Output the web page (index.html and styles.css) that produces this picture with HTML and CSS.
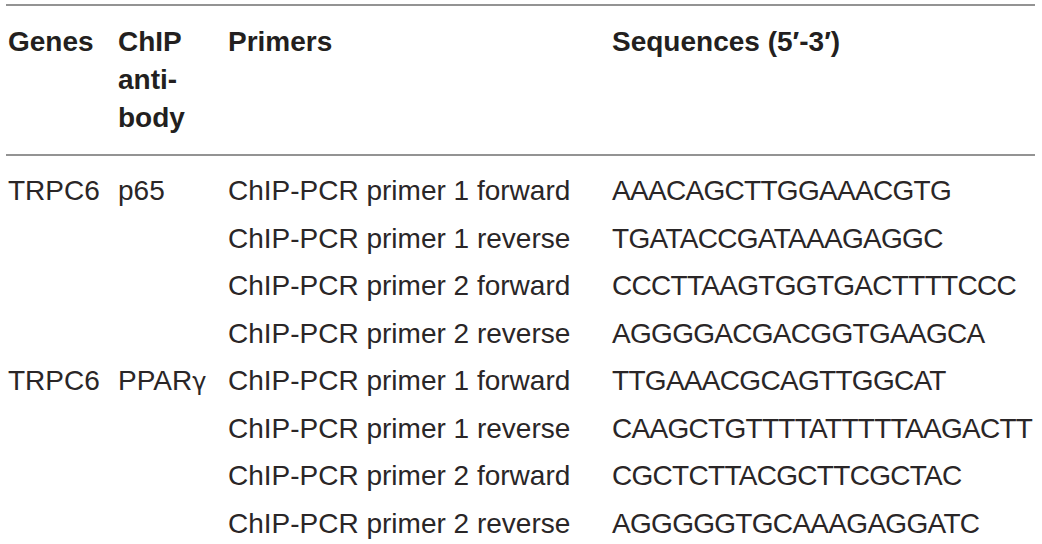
FILE: index.html
```html
<!DOCTYPE html>
<html>
<head>
<meta charset="utf-8">
<link rel="stylesheet" href="styles.css">
</head>
<body>
<table class="primers">
  <colgroup>
    <col class="c-gene"><col class="c-ab"><col class="c-primer"><col class="c-seq">
  </colgroup>
  <thead>
    <tr>
      <th>Genes</th>
      <th>ChIP<br>anti-<br>body</th>
      <th>Primers</th>
      <th>Sequences (5′-3′)</th>
    </tr>
  </thead>
  <tbody>
    <tr class="first"><td>TRPC6</td><td>p65</td><td>ChIP-PCR primer 1 forward</td><td class="seq">AAACAGCTTGGAAACGTG</td></tr>
    <tr><td></td><td></td><td>ChIP-PCR primer 1 reverse</td><td class="seq">TGATACCGATAAAGAGGC</td></tr>
    <tr><td></td><td></td><td>ChIP-PCR primer 2 forward</td><td class="seq">CCCTTAAGTGGTGACTTTTCCC</td></tr>
    <tr><td></td><td></td><td>ChIP-PCR primer 2 reverse</td><td class="seq">AGGGGACGACGGTGAAGCA</td></tr>
    <tr><td>TRPC6</td><td>PPAR<span class="greek">γ</span></td><td>ChIP-PCR primer 1 forward</td><td class="seq">TTGAAACGCAGTTGGCAT</td></tr>
    <tr><td></td><td></td><td>ChIP-PCR primer 1 reverse</td><td class="seq">CAAGCTGTTTTATTTTTAAGACTT</td></tr>
    <tr><td></td><td></td><td>ChIP-PCR primer 2 forward</td><td class="seq">CGCTCTTACGCTTCGCTAC</td></tr>
    <tr><td></td><td></td><td>ChIP-PCR primer 2 reverse</td><td class="seq">AGGGGGTGCAAAGAGGATC</td></tr>
  </tbody>
</table>
</body>
</html>
```

FILE: styles.css
```css
html, body {
  margin: 0;
  padding: 0;
  background: #ffffff;
}

body {
  padding: 4px 7px 0 6px;
  font-family: "Liberation Sans", Arial, Helvetica, sans-serif;
  color: #231f20;
}

.primers {
  width: 1029px;
  border-collapse: collapse;
  table-layout: fixed;
  font-size: 28px;
  border-top: 2px solid #939393;
}

.c-gene { width: 110px; }
.c-ab { width: 110px; }
.c-primer { width: 384px; }
.c-seq { width: 425px; }

.primers th {
  text-align: left;
  vertical-align: top;
  font-weight: bold;
  line-height: 38px;
  padding: 17px 0 17px 2px;
  border-bottom: 2px solid #939393;
  white-space: nowrap;
}

.primers td {
  text-align: left;
  vertical-align: top;
  line-height: 47.5px;
  padding: 0 0 0 2px;
  white-space: nowrap;
  color: #2a2627;
}

.primers tr.first td {
  padding-top: 11px;
}

.primers td.seq {
  letter-spacing: -0.7px;
}

.greek {
  font-family: "DejaVu Sans", "Liberation Sans", sans-serif;
  font-size: 24px;
  line-height: 0;
}
```
